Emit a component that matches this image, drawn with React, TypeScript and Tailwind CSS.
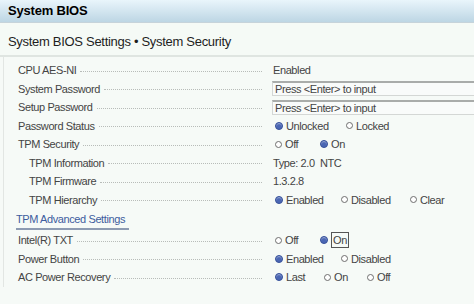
import React from "react";

type Opt = { label: string; checked?: boolean; w?: string; focus?: boolean };

function Radio({ label, checked, w, focus }: Opt) {
  return (
    <div className={`flex items-center gap-[3px] ${w ?? ""}`}>
      {checked ? (
        <span className="w-[8px] h-[8px] rounded-full bg-[#4a66b4] border border-[#36509a] shadow-[inset_0_1px_1px_rgba(255,255,255,0.5)]" />
      ) : (
        <span className="w-[7px] h-[7px] rounded-full bg-white border border-[#6e6e6e]" />
      )}
      <span className={focus ? "border border-[#555] px-[1px] leading-[14px]" : ""}>{label}</span>
    </div>
  );
}

function Row({
  label,
  indent,
  children,
}: {
  label: string;
  indent?: boolean;
  children: React.ReactNode;
}) {
  return (
    <div className="flex items-center h-[18.5px]">
      <div className={`flex items-center shrink-0 w-[262px] ${indent ? "pl-[29px]" : "pl-[18px]"}`}>
        <span className="whitespace-nowrap">{label}</span>
        <span className="flex-1 ml-[4px] mt-[2px] border-b border-dotted border-[#b8bcb9]" />
      </div>
      <div className="ml-[10px] flex items-center shrink-0">{children}</div>
    </div>
  );
}

function InputBox() {
  return (
    <div className="w-[220px] h-[15px] flex items-center pl-[2px] bg-[#f9fbfa] border border-[#d4d7d5] border-t-[#a9acaa] border-t-2 text-[#444]">
      Press &lt;Enter&gt; to input
    </div>
  );
}

export default function App() {
  return (
    <div className="w-[474px] h-[304px] overflow-hidden bg-[#f6faf7] text-[11px] tracking-[-0.4px] text-[#444] font-['Liberation_Sans',Arial,sans-serif]">
      {/* Title bar */}
      <div className="h-[23px] flex items-center px-[8px] bg-gradient-to-b from-[#e9f5fb] to-[#bdd6e4] border-b border-[#c6d3da]">
        <span className="text-[13px] font-bold tracking-[-0.2px] text-black">System BIOS</span>
      </div>

      {/* Breadcrumb */}
      <div className="h-[34px] flex items-center pt-[6px] px-[8px] bg-[#f5faf6] border-b-2 border-[#dfe5e1]">
        <span className="text-[13px] tracking-[-0.3px] text-[#1e1e1e]">System BIOS Settings • System Security</span>
      </div>

      {/* Settings */}
      <div className="ml-[3px] border-l border-[#e2e6e3] pt-[4px]">
        <div className="-ml-[4px]">
          <Row label="CPU AES-NI">
            <span className="pl-[1px]">Enabled</span>
          </Row>
          <Row label="System Password">
            <InputBox />
          </Row>
          <Row label="Setup Password">
            <InputBox />
          </Row>
          <Row label="Password Status">
            <div className="flex pl-[3px]">
              <Radio label="Unlocked" checked w="w-[71px]" />
              <Radio label="Locked" />
            </div>
          </Row>
          <Row label="TPM Security">
            <div className="flex pl-[3px]">
              <Radio label="Off" w="w-[45px]" />
              <Radio label="On" checked />
            </div>
          </Row>
          <Row label="TPM Information" indent>
            <span className="pl-[1px]">Type: 2.0&nbsp; NTC</span>
          </Row>
          <Row label="TPM Firmware" indent>
            <span className="pl-[1px]">1.3.2.8</span>
          </Row>
          <Row label="TPM Hierarchy" indent>
            <div className="flex pl-[3px]">
              <Radio label="Enabled" checked w="w-[66px]" />
              <Radio label="Disabled" w="w-[69px]" />
              <Radio label="Clear" />
            </div>
          </Row>

          <div className="h-[22px] flex items-end pl-[16px] pb-[1px]">
            <span className="pr-[4px] pb-[2px] leading-[14px] text-[#3d5c9e] border-b-2 border-[#8d9bb2]">
              TPM Advanced Settings
            </span>
          </div>

          <Row label="Intel(R) TXT">
            <div className="flex pl-[3px]">
              <Radio label="Off" w="w-[45px]" />
              <Radio label="On" checked focus />
            </div>
          </Row>
          <Row label="Power Button">
            <div className="flex pl-[3px]">
              <Radio label="Enabled" checked w="w-[66px]" />
              <Radio label="Disabled" />
            </div>
          </Row>
          <Row label="AC Power Recovery">
            <div className="flex pl-[3px]">
              <Radio label="Last" checked w="w-[49px]" />
              <Radio label="On" w="w-[43px]" />
              <Radio label="Off" />
            </div>
          </Row>
        </div>
      </div>
    </div>
  );
}
